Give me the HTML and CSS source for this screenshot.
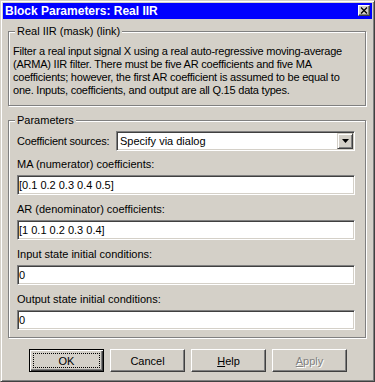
FILE: index.html
```html
<!DOCTYPE html>
<html lang="en">
<head>
  <meta charset="UTF-8" />
  <title>Block Parameters: Real IIR</title>
  <link rel="stylesheet" href="styles.css">
</head>
<body>

  <div class="window">
    <div class="titlebar">
      <span class="title">Block Parameters: Real IIR</span>
      <span class="close-btn">
        <svg width="8" height="7" viewBox="0 0 8 7"><path d="M1 0.5 L7 6.5 M7 0.5 L1 6.5" stroke="#000" stroke-width="1.3" fill="none"/></svg>
      </span>
    </div>

    <div class="dialog">
      <fieldset class="group">
        <legend>Real IIR (mask) (link)</legend>
        <p class="desc">Filter a real input signal X using a real auto-regressive moving-average<br>(ARMA) IIR filter. There must be five AR coefficients and five MA<br>coefficients; however, the first AR coefficient is assumed to be equal to<br>one. Inputs, coefficients, and output are all Q.15 data types.</p>
      </fieldset>

      <fieldset class="group">
        <legend>Parameters</legend>
        <div class="params">
          <div class="combo-row">
            <label class="row-label">Coefficient sources:</label>
            <div class="combo">
              <span class="combo-text">Specify via dialog</span>
              <span class="combo-btn">
                <svg width="7" height="4" viewBox="0 0 7 4"><path d="M0 0 H7 L3.5 4 Z" fill="#000"/></svg>
              </span>
            </div>
          </div>
          <div class="field">
            <label>MA (numerator) coefficients:</label>
            <input class="textbox" type="text" value="[0.1 0.2 0.3 0.4 0.5]">
          </div>
          <div class="field">
            <label>AR (denominator) coefficients:</label>
            <input class="textbox" type="text" value="[1 0.1 0.2 0.3 0.4]">
          </div>
          <div class="field">
            <label>Input state initial conditions:</label>
            <input class="textbox" type="text" value="0">
          </div>
          <div class="field">
            <label>Output state initial conditions:</label>
            <input class="textbox" type="text" value="0">
          </div>
        </div>
      </fieldset>

      <div class="buttons">
        <button class="btn btn-default"><span class="focus-ring">OK</span></button>
        <button class="btn">Cancel</button>
        <button class="btn"><u>H</u>elp</button>
        <button class="btn" disabled><u>A</u>pply</button>
      </div>
    </div>
  </div>

</body>
</html>
```

FILE: styles.css
```css
body {
  margin: 0;
  background-color: #d4d0c8;
}
.window {
  width: 375px;
  height: 382px;
  box-sizing: border-box;
  padding: 2px;
  background-color: #d4d0c8;
  border: 1px solid;
  border-color: #d4d0c8 #404040 #404040 #d4d0c8;
  box-shadow: inset 1px 1px #fff, inset -1px -1px #808080;
  font-family: "Liberation Sans", Arial, sans-serif;
  font-size: 11px;
  color: #000;
}
.titlebar {
  display: flex;
  align-items: flex-start;
  height: 16px;
  padding-left: 2px;
  background-color: #0000ff;
  color: #fff;
}
.title {
  font-weight: bold;
  font-size: 12px;
  line-height: 16px;
}
.close-btn {
  display: flex;
  align-items: center;
  justify-content: center;
  width: 12px;
  height: 11px;
  box-sizing: border-box;
  margin: 2px 2px 0 auto;
  background-color: #d4d0c8;
  border: 1px solid;
  border-color: #fff #404040 #404040 #fff;
  box-shadow: inset -1px -1px #808080;
}
.dialog {
  padding: 6px 6px 0 5px;
}
.group {
  margin: 0 0 8px 0;
  padding: 0;
  min-width: 0;
  border: 1px solid #808080;
  box-shadow: inset 1px 1px #fff, 1px 1px #fff;
}
.group legend {
  margin-left: 6px;
  padding: 0 2px;
  line-height: 13px;
  background-color: #d4d0c8;
}
.desc {
  margin: 0;
  padding: 7px 4px 8px 4px;
  line-height: 13px;
  white-space: nowrap;
  letter-spacing: -0.22px;
}
.params {
  padding: 4px 10px 7px 8px;
}
.combo-row {
  display: flex;
  height: 20px;
}
.row-label {
  width: 99px;
  line-height: 20px;
  letter-spacing: -0.2px;
}
.combo {
  flex: 1;
  display: flex;
  align-items: center;
  box-sizing: border-box;
  height: 20px;
  background-color: #fff;
  border: 1px solid;
  border-color: #808080 #fff #fff #808080;
  box-shadow: inset 1px 1px #404040, inset -1px -1px #d4d0c8;
  padding: 1px;
}
.combo-text {
  flex: 1;
  padding-left: 2px;
}
.combo-btn {
  display: flex;
  align-items: center;
  justify-content: center;
  width: 16px;
  height: 16px;
  box-sizing: border-box;
  background-color: #d4d0c8;
  border: 1px solid;
  border-color: #d4d0c8 #404040 #404040 #d4d0c8;
  box-shadow: inset 1px 1px #fff, inset -1px -1px #808080;
}
.field {
  margin-top: 8px;
}
.combo-row + .field {
  margin-top: 7px;
}
.field label {
  display: block;
  line-height: 13px;
  margin-bottom: 4px;
}
.textbox {
  display: block;
  width: 100%;
  height: 20px;
  box-sizing: border-box;
  margin: 0;
  padding: 0 1px;
  font-family: inherit;
  font-size: 11px;
  color: #000;
  background-color: #fff;
  border: 1px solid;
  border-color: #808080 #fff #fff #808080;
  box-shadow: inset 1px 1px #404040, inset -1px -1px #d4d0c8;
  outline: none;
}
.buttons {
  display: flex;
  gap: 6px;
  margin-top: 11px;
  padding-left: 21px;
}
.btn {
  display: flex;
  align-items: center;
  justify-content: center;
  width: 75px;
  height: 23px;
  box-sizing: border-box;
  padding: 0;
  font-family: inherit;
  font-size: 11px;
  color: #000;
  background-color: #d4d0c8;
  border: 1px solid;
  border-color: #fff #404040 #404040 #fff;
  box-shadow: inset -1px -1px #808080;
}
.btn-default {
  border-color: #000;
  box-shadow: inset 1px 1px #fff, inset -1px -1px #404040, inset -2px -2px #808080;
}
.focus-ring {
  flex: 1;
  align-self: stretch;
  display: flex;
  align-items: center;
  justify-content: center;
  margin: 3px;
  border: 1px dotted #000;
}
.btn:disabled {
  color: #808080;
  text-shadow: 1px 1px #fff;
}
```
